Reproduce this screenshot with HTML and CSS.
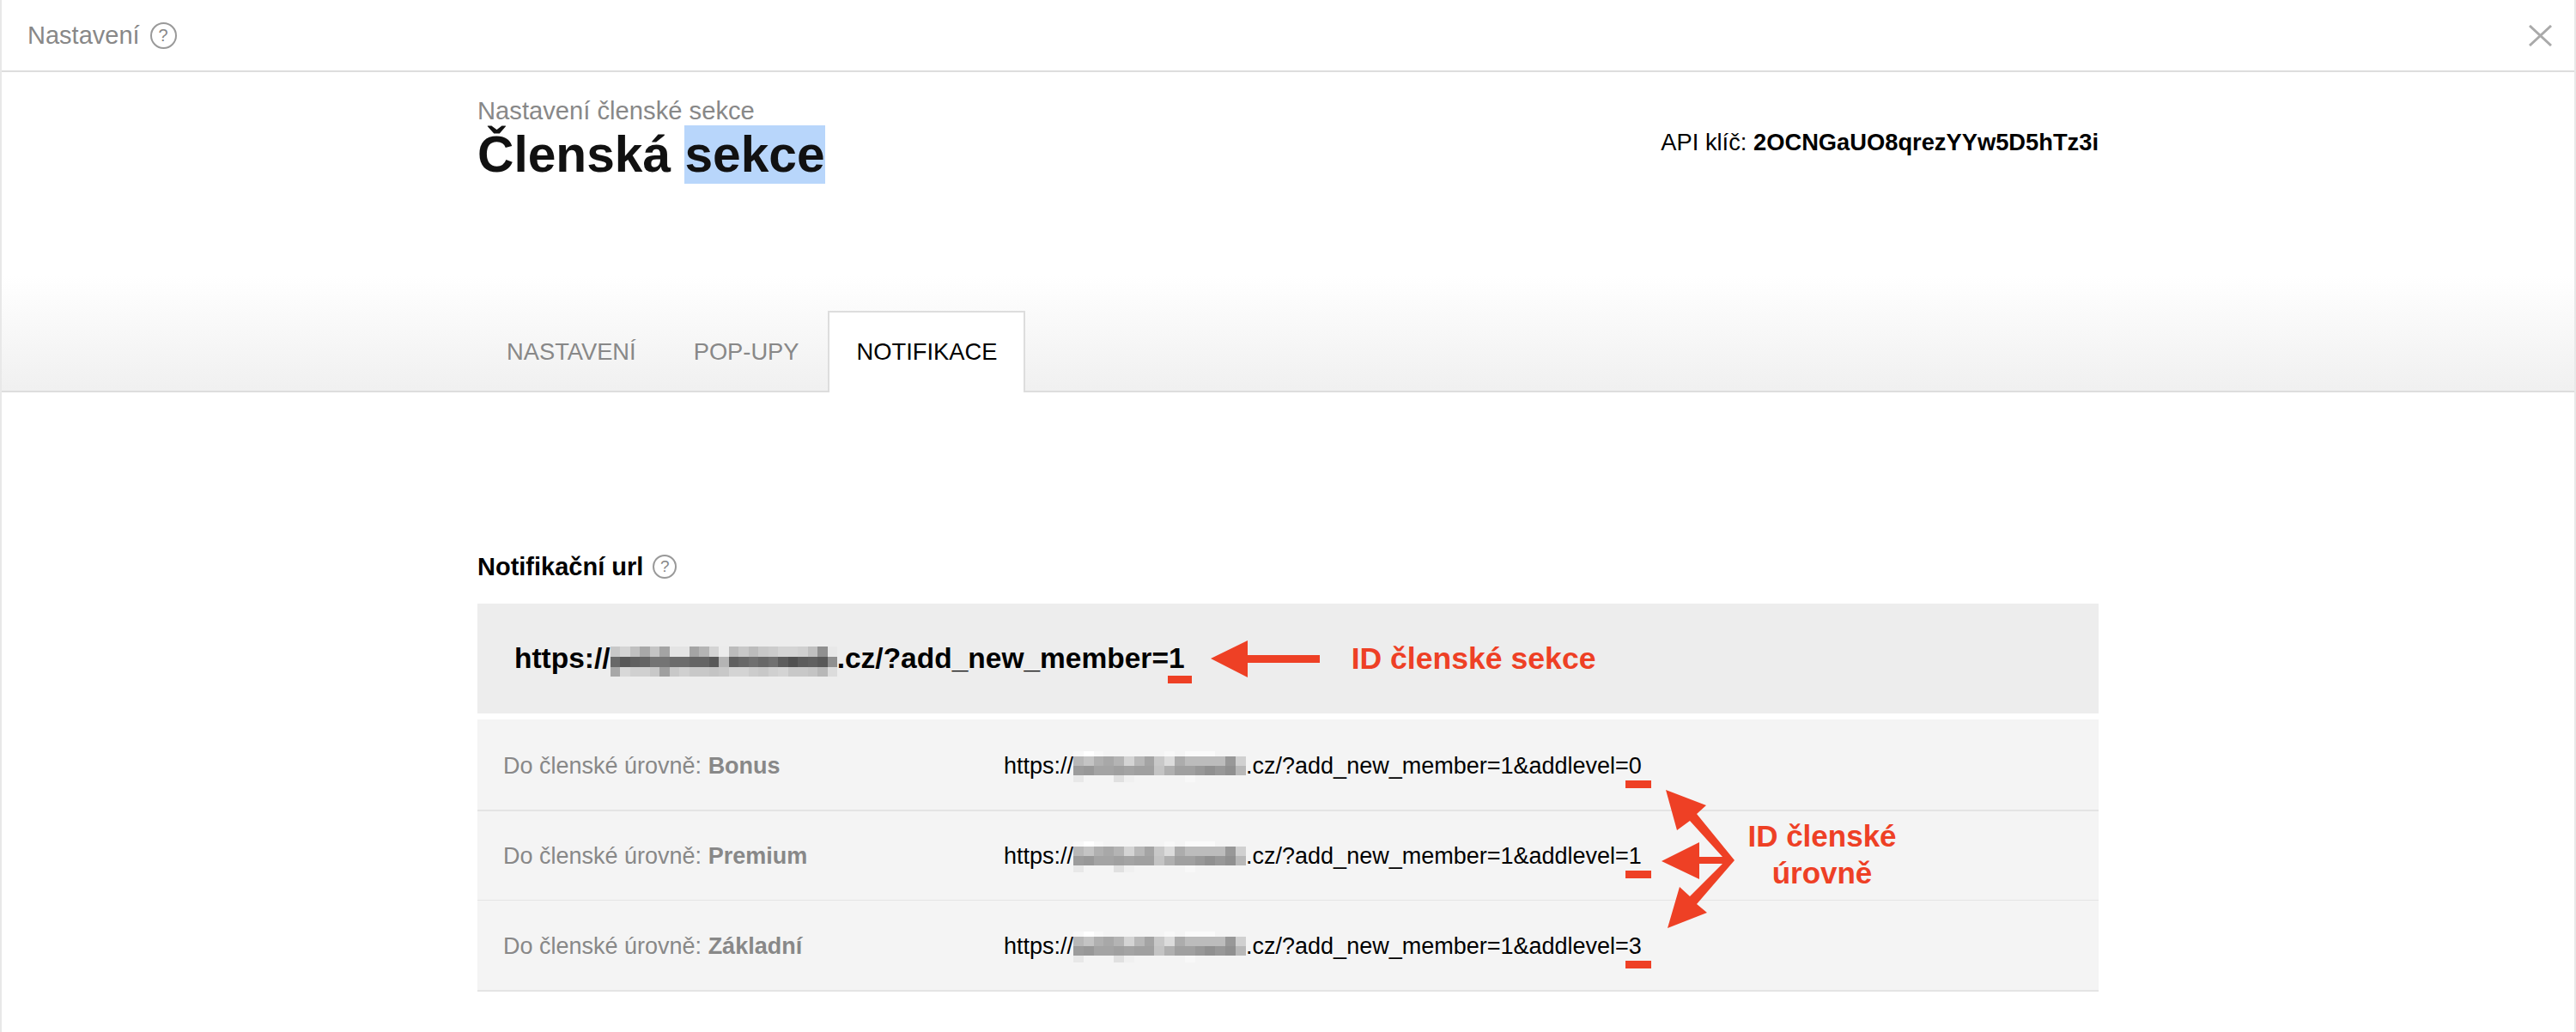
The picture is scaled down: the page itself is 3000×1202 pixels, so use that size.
FILE: index.html
```html
<!DOCTYPE html>
<html lang="cs">
<head>
    <meta charset="UTF-8" />
    <meta name="viewport" content="width=device-width, initial-scale=1.0" />
    <title>Nastavení - Členská sekce</title>
    <link rel="stylesheet" href="styles.css">
</head>
<body>
    <div class="window">
        <div class="topbar">
            <div class="topbar-title">Nastavení <span class="help help-large">?</span></div>
            <svg class="close-icon" width="27" height="25" viewBox="0 0 27 25">
                <path d="M1 1 L26 24 M26 1 L1 24" />
            </svg>
        </div>

        <div class="header">
            <div class="container header-top">
                <div>
                    <div class="subtitle">Nastavení členské sekce</div>
                    <h1>Členská <span class="selected">sekce</span></h1>
                </div>
                <div class="api-key">API klíč: <b>2OCNGaUO8qrezYYw5D5hTz3i</b></div>
            </div>
            <div class="container tabs">
                <div class="tab">NASTAVENÍ</div>
                <div class="tab">POP-UPY</div>
                <div class="tab active">NOTIFIKACE</div>
            </div>
        </div>

        <div class="container content">
            <h2>Notifikační url <span class="help">?</span></h2>

            <div class="main-url">
                <div class="url">https://<span class="mosaic mosaic-dark"></span>.cz/?add_new_member=<span class="id">1</span></div>
                <svg class="arrow-left" width="127" height="43" viewBox="0 0 127 43">
                    <path d="M0 21 L43 0 V17 H127 V26 H43 V43 Z" />
                </svg>
                <div class="note">ID členské sekce</div>
            </div>

            <div class="levels">
                <div class="level level-first">
                    <div class="level-name">Do členské úrovně: <b>Bonus</b></div>
                    <div class="level-url">https://<span class="mosaic mosaic-light"></span>.cz/?add_new_member=1&amp;addlevel=<span class="id">0</span></div>
                </div>
                <div class="level level-second">
                    <div class="level-name">Do členské úrovně: <b>Premium</b></div>
                    <div class="level-url">https://<span class="mosaic mosaic-light"></span>.cz/?add_new_member=1&amp;addlevel=<span class="id">1</span></div>
                </div>
                <div class="level level-third">
                    <div class="level-name">Do členské úrovně: <b>Základní</b></div>
                    <div class="level-url">https://<span class="mosaic mosaic-light"></span>.cz/?add_new_member=1&amp;addlevel=<span class="id">3</span></div>
                </div>

                <svg class="level-arrows" width="90" height="166" viewBox="0 0 90 166">
                    <path d="M5 1 L52 19 L41 29 L85 83 L41 134 L53 144 L7 162 L21 114 L33 125 L71 87 H44 V105 L0 84 L44 62 V79 H71 L33 37 L18 48 Z" />
                </svg>
                <div class="levels-note">ID členské<br>úrovně</div>
            </div>
        </div>
    </div>
</body>
</html>
```

FILE: styles.css
```css
/* Global Styles */
body {
    font-family: "Liberation Sans", Arial, sans-serif;
    background-color: #fff;
    color: #000;
    margin: 0;
}

.window {
    box-sizing: border-box;
    height: 1202px;
    border-left: 2px solid #e8e8e8;
    border-right: 2px solid #e8e8e8;
    overflow: hidden;
}

.container {
    width: 1888px;
    margin: 0 auto;
}

/* Top bar */
.topbar {
    display: flex;
    justify-content: space-between;
    align-items: center;
    height: 82px;
    padding: 0 26px 0 30px;
    border-bottom: 2px solid #ddd;
}

.topbar-title {
    display: flex;
    align-items: center;
    gap: 12px;
    font-size: 29px;
    color: #888;
}

.close-icon path {
    fill: none;
    stroke: #aaa;
    stroke-width: 3;
}

.help {
    box-sizing: border-box;
    display: inline-flex;
    justify-content: center;
    align-items: center;
    width: 28px;
    height: 28px;
    border: 2px solid #999;
    border-radius: 50%;
    color: #888;
    font-size: 19px;
    font-weight: normal;
}

.help-large {
    width: 31px;
    height: 31px;
    font-size: 20px;
}

/* Header */
.header {
    display: flex;
    flex-direction: column;
    justify-content: space-between;
    height: 371px;
    border-bottom: 2px solid #ddd;
    background: linear-gradient(#fff 64%, #f0f0f0 100%);
}

.header-top {
    display: flex;
    justify-content: space-between;
    padding-top: 28px;
}

.subtitle {
    font-size: 29.2px;
    line-height: 34px;
    color: #888;
}

h1 {
    margin: 0;
    font-size: 58.7px;
    line-height: 68px;
    font-weight: bold;
    color: #111;
}

.selected {
    background-color: #b8d6fb;
    padding: 1px 0 2px;
}

.api-key {
    padding-top: 38px;
    font-size: 27.3px;
    line-height: 32px;
}

/* Tabs */
.tabs {
    display: flex;
    gap: 3px;
    box-sizing: border-box;
    padding-left: 2px;
    margin-bottom: -2px;
}

.tab {
    box-sizing: border-box;
    height: 95px;
    padding: 0 30px;
    border: 2px solid transparent;
    border-bottom: none;
    font-size: 27.3px;
    line-height: 91px;
    color: #888;
}

.tab.active {
    margin-left: -2px;
    padding: 0 31px 0 32px;
    border-color: #ddd;
    background-color: #fff;
    color: #000;
}

/* Notification urls */
h2 {
    display: flex;
    align-items: center;
    gap: 11px;
    margin: 183px 0 23px;
    font-size: 29px;
    line-height: 40px;
}

.main-url {
    display: flex;
    align-items: center;
    height: 128px;
    padding-left: 43px;
    background-color: #ededed;
}

.url {
    font-size: 33.5px;
    line-height: 60px;
    font-weight: bold;
    white-space: nowrap;
}

.id {
    position: relative;
}

.id::after {
    content: "";
    position: absolute;
    left: -4px;
    top: calc(100% + 2px);
    width: 30px;
    height: 9px;
    background-color: #ee4025;
}

.url .id::after {
    left: -1px;
    width: 28px;
}

.arrow-left {
    margin-left: 30px;
}

.arrow-left path,
.level-arrows path {
    fill: #ee4025;
}

.note {
    margin-left: 37px;
    font-size: 35.6px;
    font-weight: bold;
    color: #ee4025;
}

/* Pixelated parts of the address */
.mosaic {
    display: inline-block;
    vertical-align: -10px;
    background-repeat: no-repeat;
    filter: blur(0.6px);
}

.mosaic-dark {
    width: 264px;
    height: 35px;
    background-size: 100% 12px;
    background-position: 0 0, 0 12px, 0 23px;
    background-image:
        linear-gradient(90deg, #c8c8c8 0 11.5px, #d4d4d4 0 23px, #c0c0c0 0 34.5px, #a8a8a8 0 46px, #c4c4c4 0 57.5px, #a4a4a4 0 69px, #e4e4e4 0 80.5px, #e4e4e4 0 92px, #a4a4a4 0 103.5px, #b4b4b4 0 115px, #d4d4d4 0 126.5px, #ececec 0 138px, #bcbcbc 0 149.5px, #c8c8c8 0 161px, #bcbcbc 0 172.5px, #c8c8c8 0 184px, #cccccc 0 195.5px, #d4d4d4 0 207px, #d4d4d4 0 218.5px, #d0d0d0 0 230px, #c0c0c0 0 241.5px, #909090 0 253px, #e8e8e8 0),
        linear-gradient(90deg, #686868 0 11.5px, #585858 0 23px, #606060 0 34.5px, #646464 0 46px, #747474 0 57.5px, #747474 0 69px, #6c6c6c 0 80.5px, #6c6c6c 0 92px, #646464 0 103.5px, #646464 0 115px, #585858 0 126.5px, #b4b4b4 0 138px, #606060 0 149.5px, #686868 0 161px, #707070 0 172.5px, #686868 0 184px, #707070 0 195.5px, #5c5c5c 0 207px, #505050 0 218.5px, #5c5c5c 0 230px, #606060 0 241.5px, #585858 0 253px, #909090 0),
        linear-gradient(90deg, #a8a8a8 0 11.5px, #d8d8d8 0 23px, #d0d0d0 0 34.5px, #d0d0d0 0 46px, #c8c8c8 0 57.5px, #a0a0a0 0 69px, #c8c8c8 0 80.5px, #d0d0d0 0 92px, #c8c8c8 0 103.5px, #c8c8c8 0 115px, #c4c4c4 0 126.5px, #c8c8c8 0 138px, #d4d4d4 0 149.5px, #d4d4d4 0 161px, #cccccc 0 172.5px, #c8c8c8 0 184px, #d0d0d0 0 195.5px, #d4d4d4 0 207px, #c8c8c8 0 218.5px, #c8c8c8 0 230px, #c4c4c4 0 241.5px, #b8b8b8 0 253px, #dcdcdc 0);
}

.mosaic-light {
    width: 201px;
    height: 36px;
    background-size: 100% 6px, 100% 11px, 100% 11px, 100% 8px;
    background-position: 0 0, 0 6px, 0 17px, 0 28px;
    background-image:
        linear-gradient(90deg, #f8f8f8 0 11.8px, #ffffff 0 23.6px, #f8f8f8 0 35.4px, #f4f4f4 0 106.2px, #f8f8f8 0 118px, #f4f4f4 0 129.8px, #fafafa 0 165.2px, #f4f4f4 0),
        linear-gradient(90deg, #b8b8b8 0 11.8px, #c4c4c4 0 23.6px, #b0b0b0 0 35.4px, #a8a8a8 0 47.2px, #b4b4b4 0 59px, #d4d4d4 0 70.8px, #b8b8b8 0 82.6px, #a4a4a4 0 94.4px, #c8c8c8 0 106.2px, #dcdcdc 0 118px, #acacac 0 129.8px, #bcbcbc 0 177px, #989898 0 188.8px, #d0d0d0 0),
        linear-gradient(90deg, #9c9c9c 0 11.8px, #989898 0 23.6px, #a4a4a4 0 47.2px, #a0a0a0 0 59px, #a4a4a4 0 70.8px, #a0a0a0 0 94.4px, #c4c4c4 0 106.2px, #b0b0b0 0 118px, #a0a0a0 0 141.6px, #989898 0 153.4px, #909090 0 165.2px, #989898 0 177px, #909090 0 188.8px, #b8b8b8 0),
        linear-gradient(90deg, #e8e8e8 0 11.8px, #f4f4f4 0 47.2px, #e0e0e0 0 59px, #f0f0f0 0 70.8px, #f4f4f4 0 129.8px, #f8f8f8 0 141.6px, #f4f4f4 0);
}

/* Member levels */
.levels {
    position: relative;
    margin-top: 7px;
    background-color: #f4f4f4;
}

.level {
    box-sizing: border-box;
    display: flex;
    align-items: center;
    padding: 2px 0 0 30px;
    border-bottom: 2px solid #e4e4e4;
    font-size: 27px;
    line-height: 56px;
}

.level-first {
    height: 107px;
}

.level-second {
    height: 104px;
    padding-top: 1px;
    border-bottom-width: 1px;
}

.level-third {
    height: 106px;
    padding-top: 1px;
}

.level-name {
    width: 583px;
    color: #888;
}

.level-url {
    white-space: nowrap;
}

.level-arrows {
    position: absolute;
    left: 1379px;
    top: 81px;
}

.levels-note {
    position: absolute;
    left: 1466px;
    top: 114px;
    width: 200px;
    font-size: 35px;
    line-height: 43px;
    font-weight: bold;
    text-align: center;
    color: #ee4025;
}
```
